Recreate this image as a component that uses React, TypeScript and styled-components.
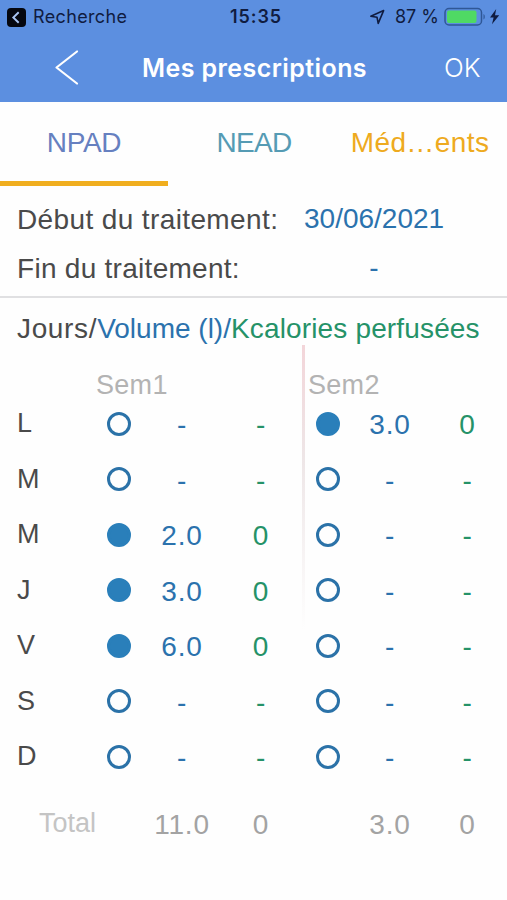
import React from 'react';
import styled, { createGlobalStyle } from 'styled-components';

const GlobalStyle = createGlobalStyle`
  * { box-sizing: border-box; }
  body { margin: 0; background: #fefefe; }
`;

const Screen = styled.main`
  width: 507px;
  height: 900px;
  overflow: hidden;
  background: #fefefe;
  color: #4a4a4a;
  font-family: 'Liberation Sans', Arial, sans-serif;
  font-size: 28px;
`;

const Header = styled.header`
  height: 102px;
  background: #5c8fe0;
  font-family: Inter, sans-serif;
`;

const StatusBar = styled.div`
  display: grid;
  grid-template-columns: 1fr auto 1fr;
  align-items: center;
  height: 34px;
  padding: 0 7px;
  color: #101c40;
  font-size: 18px;
  line-height: 34px;
`;

const StatusGroup = styled.div<{ $end?: boolean }>`
  display: flex;
  align-items: center;
  justify-content: ${({ $end }) => ($end ? 'flex-end' : 'flex-start')};
  white-space: nowrap;
`;

const BackLabel = styled.span`
  margin-left: 7px;
  letter-spacing: 0.35px;
`;

const Clock = styled.span`
  padding-left: 5px;
  font-weight: 600;
  letter-spacing: 0.9px;
`;

const Percent = styled.span`
  margin: 0 5px 0 10px;
`;

const NavBar = styled.nav`
  display: grid;
  grid-template-columns: 134px 1fr 63px;
  align-items: center;
  height: 68px;
  color: #fff;
`;

const BackButton = styled.button`
  display: flex;
  justify-content: center;
  padding: 0;
  border: 0;
  background: none;
`;

const Title = styled.h1`
  margin: 0 0 0 8px;
  font-size: 25px;
  font-weight: 600;
  letter-spacing: 0.42px;
  line-height: 68px;
  white-space: nowrap;
`;

const OkButton = styled.button`
  padding: 0;
  border: 0;
  background: none;
  color: #fff;
  font: 300 26px/68px Inter, sans-serif;
  text-align: left;
`;

const Tabs = styled.div`
  display: grid;
  grid-template: 84px / 168px 172px 1fr;
`;

const Tab = styled.div<{ $color: string; $active?: boolean; $spacing?: number }>`
  border-bottom: 5px solid ${({ $active }) => ($active ? '#f0ae1f' : 'transparent')};
  color: ${({ $color }) => $color};
  letter-spacing: ${({ $spacing = 0 }) => $spacing}px;
  line-height: 81px;
  text-align: center;
  white-space: nowrap;
`;

const WideTab = styled(Tab)`
  padding-right: 7px;
`;

const Info = styled.section`
  height: 112px;
  padding: 9px 17px 0;
  border-bottom: 2px solid #e0e0e2;
`;

const InfoRow = styled.div`
  display: grid;
  grid-template-columns: 287px 140px;
  height: 49px;
  line-height: 50px;
  white-space: nowrap;
`;

const InfoLabel = styled.span<{ $spacing: number }>`
  letter-spacing: ${({ $spacing }) => $spacing}px;
`;

const InfoValue = styled.span`
  color: #2b72ad;
  line-height: 47px;
  text-align: center;
`;

const Legend = styled.h2`
  height: 47px;
  margin: 0;
  padding: 7px 17px 0;
  font-size: 28px;
  font-weight: 400;
  line-height: 48px;
  white-space: nowrap;
`;

const LegendPart = styled.span<{ $color?: string; $spacing: number }>`
  color: ${({ $color = 'inherit' }) => $color};
  letter-spacing: ${({ $spacing }) => $spacing}px;
`;

const Schedule = styled.section`
  position: relative;
  padding-top: 24px;

  &::before {
    content: '';
    position: absolute;
    top: 0;
    left: 302px;
    width: 3px;
    height: 285px;
    background: linear-gradient(#f3d5d9, #eee6e7 40%, #fefefe);
  }
`;

const Row = styled.div<{ $height: number }>`
  display: grid;
  grid-template-columns: 71px 62px 64px 94px 40px 84px 71px;
  align-items: center;
  height: ${({ $height }) => $height}px;
  padding-left: 17px;
  white-space: nowrap;
`;

const WeekRow = styled.div`
  display: grid;
  grid-template-columns: 212px 1fr;
  height: 27px;
  padding-left: 96px;
  color: #b3b3b3;
  font-size: 27px;
  letter-spacing: 0.3px;
  line-height: 33px;
`;

const Day = styled.span`
  font-size: 27px;
  line-height: 55px;
`;

const Dot = styled.span<{ $filled: boolean }>`
  justify-self: center;
  width: 24px;
  height: 24px;
  border: 3px solid ${({ $filled }) => ($filled ? '#2a7fba' : '#2b72a8')};
  border-radius: 50%;
  background: ${({ $filled }) => ($filled ? '#2a7fba' : 'transparent')};
`;

const Value = styled.span<{ $color: string }>`
  padding-top: 3px;
  color: ${({ $color }) => $color};
  letter-spacing: 0.8px;
  line-height: 52px;
  text-align: center;
`;

const TotalLabel = styled.span`
  grid-column: span 2;
  padding-left: 22px;
  color: #c4c4c4;
  font-size: 27px;
`;

const BLUE = '#2b72ad';
const GREEN = '#259268';
const GREY = '#a3a3a3';

type Dose = { volume: string; kcal: string } | null;

const days: { name: string; weeks: [Dose, Dose] }[] = [
  { name: 'L', weeks: [null, { volume: '3.0', kcal: '0' }] },
  { name: 'M', weeks: [null, null] },
  { name: 'M', weeks: [{ volume: '2.0', kcal: '0' }, null] },
  { name: 'J', weeks: [{ volume: '3.0', kcal: '0' }, null] },
  { name: 'V', weeks: [{ volume: '6.0', kcal: '0' }, null] },
  { name: 'S', weeks: [null, null] },
  { name: 'D', weeks: [null, null] },
];

const ReturnIcon = () => (
  <svg width="19" height="19" viewBox="0 0 19 19">
    <rect width="19" height="19" rx="4" fill="#05070f" />
    <path d="M11.7 4.2 6.3 9.5l5.4 5.3" fill="none" stroke="#a9c4f2" strokeWidth="1.9" />
  </svg>
);

const LocationIcon = () => (
  <svg width="16" height="16" viewBox="0 0 16 16">
    <path
      d="M14.6 1.6 1.8 7.2l6.2 1 1.2 6.2Z"
      fill="none"
      stroke="#101c40"
      strokeWidth="1.6"
      strokeLinejoin="round"
    />
  </svg>
);

const BatteryIcon = () => (
  <svg width="56" height="20" viewBox="0 0 56 20">
    <rect x="1" y="1.5" width="36.5" height="16.5" rx="4" fill="none" stroke="#2f5796" strokeWidth="1.5" />
    <rect x="3" y="3.5" width="29.5" height="12.5" rx="2" fill="#4fd964" />
    <path d="M39.5 7v5.5c1.7-.6 1.7-4.9 0-5.5Z" fill="#2f5796" />
    <path d="m52.2 2-6.200 8.500h3.600l-1.600 6.800 7.200-9h-4.200Z" fill="#101c40" />
  </svg>
);

const ChevronIcon = () => (
  <svg width="26" height="38" viewBox="0 0 26 38">
    <path
      d="M23 2.5 2.5 18.5 23 34.5"
      fill="none"
      stroke="#fff"
      strokeWidth="2.2"
      strokeLinecap="round"
      strokeLinejoin="round"
    />
  </svg>
);

const WeekCells = ({ dose }: { dose: Dose }) => (
  <>
    <Dot $filled={dose !== null} />
    <Value $color={BLUE}>{dose?.volume ?? '-'}</Value>
    <Value $color={GREEN}>{dose?.kcal ?? '-'}</Value>
  </>
);

export default function App() {
  return (
    <>
      <GlobalStyle />
      <Screen>
        <Header>
          <StatusBar>
            <StatusGroup>
              <ReturnIcon />
              <BackLabel>Recherche</BackLabel>
            </StatusGroup>
            <Clock>15:35</Clock>
            <StatusGroup $end>
              <LocationIcon />
              <Percent>87 %</Percent>
              <BatteryIcon />
            </StatusGroup>
          </StatusBar>
          <NavBar>
            <BackButton aria-label="Retour">
              <ChevronIcon />
            </BackButton>
            <Title>Mes prescriptions</Title>
            <OkButton>OK</OkButton>
          </NavBar>
        </Header>
        <Tabs>
          <Tab $color="#6680c0" $spacing={-0.3} $active>NPAD</Tab>
          <Tab $color="#559bb4" $spacing={-0.7}>NEAD</Tab>
          <WideTab $color="#eeaa20" $spacing={0.4}>Méd…ents</WideTab>
        </Tabs>
        <Info>
          <InfoRow>
            <InfoLabel $spacing={0.38}>Début du traitement:</InfoLabel>
            <InfoValue>30/06/2021</InfoValue>
          </InfoRow>
          <InfoRow>
            <InfoLabel $spacing={0.28}>Fin du traitement:</InfoLabel>
            <InfoValue>-</InfoValue>
          </InfoRow>
        </Info>
        <Legend>
          <LegendPart $spacing={0.65}>Jours/</LegendPart>
          <LegendPart $spacing={0} $color={BLUE}>Volume (l)/</LegendPart>
          <LegendPart $spacing={0.15} $color={GREEN}>Kcalories perfusées</LegendPart>
        </Legend>
        <Schedule>
          <WeekRow>
            <span>Sem1</span>
            <span>Sem2</span>
          </WeekRow>
          {days.map(({ name, weeks }, index) => (
            <Row key={index} $height={55.5}>
              <Day>{name}</Day>
              <WeekCells dose={weeks[0]} />
              <WeekCells dose={weeks[1]} />
            </Row>
          ))}
          <Row $height={78}>
            <TotalLabel>Total</TotalLabel>
            <Value $color={GREY}>11.0</Value>
            <Value $color={GREY}>0</Value>
            <span />
            <Value $color={GREY}>3.0</Value>
            <Value $color={GREY}>0</Value>
          </Row>
        </Schedule>
      </Screen>
    </>
  );
}
